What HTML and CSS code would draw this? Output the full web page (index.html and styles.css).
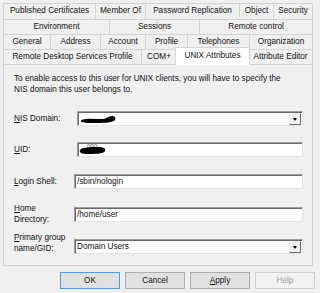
FILE: index.html
```html
<!DOCTYPE html>
<html lang="en">
<head>
    <meta charset="UTF-8">
    <title>User Properties - UNIX Attributes</title>
    <link rel="stylesheet" href="styles.css">
</head>
<body>
    <div class="dialog">
        <div class="tabs">
            <div class="tab-row">
                <span class="tab w-pub">Published Certificates</span>
                <span class="tab w-member">Member Of</span>
                <span class="tab w-pass">Password Replication</span>
                <span class="tab w-object">Object</span>
                <span class="tab w-sec">Security</span>
            </div>
            <div class="tab-row">
                <span class="tab w-env">Environment</span>
                <span class="tab w-sess">Sessions</span>
                <span class="tab w-remote">Remote control</span>
            </div>
            <div class="tab-row">
                <span class="tab w-gen">General</span>
                <span class="tab w-addr">Address</span>
                <span class="tab w-acct">Account</span>
                <span class="tab w-prof">Profile</span>
                <span class="tab w-tel">Telephones</span>
                <span class="tab w-org">Organization</span>
            </div>
            <div class="tab-row">
                <span class="tab w-rds">Remote Desktop Services Profile</span>
                <span class="tab w-com">COM+</span>
                <span class="tab w-unix active">UNIX Attributes</span>
                <span class="tab w-attr">Attribute Editor</span>
            </div>
        </div>

        <div class="panel">
            <p class="intro">To enable access to this user for UNIX clients, you will have to specify the<br>NIS domain this user belongs to.</p>

            <div class="field row-nis">
                <label class="label"><u>N</u>IS Domain:</label>
                <div class="box combo narrow">
                    <svg class="redact" width="40" height="10" viewBox="0 0 40 10">
                        <path d="M1 6 C6 4 16 5 24 5 C27 4 29 2 32 2 C35 2 36 4 35 6 C33 9 22 9 12 9 C5 9 0 9 1 6 Z" fill="#000"/>
                    </svg>
                    <span class="drop"></span>
                </div>
            </div>

            <div class="field row-uid">
                <label class="label"><u>U</u>ID:</label>
                <div class="box narrow">
                    <span class="peek">000</span>
                    <svg class="redact uid" width="30" height="10" viewBox="0 0 30 10">
                        <path d="M1 5 C3 2 12 2 19 2 C24 2 27 3 26 6 C25 9 15 9 8 9 C3 9 0 8 1 5 Z" fill="#000"/>
                    </svg>
                </div>
            </div>

            <div class="field row-login">
                <label class="label"><u>L</u>ogin Shell:</label>
                <div class="box">/sbin/nologin</div>
            </div>

            <div class="field row-home">
                <label class="label"><u>H</u>ome<br>Directory:</label>
                <div class="box">/home/user</div>
            </div>

            <div class="field row-group">
                <label class="label"><u>P</u>rimary group<br>name/GID:</label>
                <div class="box combo">Domain Users<span class="drop"></span></div>
            </div>
        </div>

        <div class="buttons">
            <button class="btn default">OK</button>
            <button class="btn">Cancel</button>
            <button class="btn"><u>A</u>pply</button>
            <button class="btn" disabled>Help</button>
        </div>
    </div>
</body>
</html>
```

FILE: styles.css
```css
* {
    margin: 0;
    padding: 0;
    box-sizing: border-box;
}

body {
    font-family: "Liberation Sans", Arial, sans-serif;
    font-size: 8.2px;
    color: #111;
    background: #f0f0f0;
    width: 320px;
    height: 293px;
    overflow: hidden;
}

.dialog {
    padding: 3px 0 0 3px;
}

.tabs {
    width: 310px;
}

.tab-row {
    display: flex;
    height: 15px;
}

.tab-row:first-child {
    height: 16px;
}

.tab {
    flex: none;
    text-align: center;
    border: 1px solid #d4d4d4;
    border-bottom: none;
    border-left: none;
    background: #f0f0f0;
    line-height: 14px;
    white-space: nowrap;
}

.tab:first-child {
    border-left: 1px solid #d4d4d4;
}

.tab.active {
    position: relative;
    z-index: 2;
    background: #fff;
    border-left: 1px solid #d4d4d4;
    margin: -2px -1px 0 -2px;
    height: 18px;
    line-height: 16px;
}

/* row 1 */
.w-pub { width: 93px; }
.w-member { width: 50px; }
.w-pass { width: 94px; }
.w-object { width: 34px; }
.w-sec { width: 39px; }

/* row 2 */
.w-env { width: 107px; }
.w-sess { width: 90px; }
.w-remote { width: 113px; }

/* row 3 */
.w-gen { width: 48px; }
.w-addr { width: 50px; }
.w-acct { width: 45px; }
.w-prof { width: 42px; }
.w-tel { width: 62px; }
.w-org { width: 63px; }

/* row 4 */
.w-rds { width: 139px; }
.w-com { width: 35px; }
.w-unix { width: 75px; }
.w-attr { width: 64px; }

.panel {
    width: 310px;
    height: 202px;
    border: 1px solid #d4d4d4;
    background: #f0f0f0;
    padding: 0 9px 0 10px;
}

.intro {
    margin-top: 8px;
    line-height: 11px;
}

.field {
    display: flex;
    align-items: center;
}

.label {
    width: 60px;
    flex: none;
    line-height: 11px;
}

.row-nis { margin-top: 16px; }
.row-uid { margin-top: 16px; }
.row-login { margin-top: 17px; }
.row-home { margin-top: 14px; height: 22px; }
.row-group { margin-top: 7px; height: 22px; align-items: flex-end; }

.box {
    position: relative;
    flex: 1;
    height: 15px;
    background: #fff;
    border: 1px solid;
    border-color: #a0a0a0 #e3e3e3 #e3e3e3 #a0a0a0;
    box-shadow: inset 1px 1px 0 #696969;
    padding-left: 2px;
    line-height: 13px;
}

.box.narrow {
    margin-left: 3px;
}

.drop {
    position: absolute;
    right: 1px;
    top: 1px;
    width: 12px;
    height: 12px;
    background: #f0f0f0;
    border: 1px solid;
    border-color: #f0f0f0 #696969 #696969 #f0f0f0;
}

.drop::after {
    content: "";
    position: absolute;
    left: 3px;
    top: 4px;
    border-left: 2.5px solid transparent;
    border-right: 2.5px solid transparent;
    border-top: 3px solid #000;
}

.redact {
    position: absolute;
    left: 2px;
    top: 2px;
}

.redact.uid {
    left: 1px;
    top: 2px;
}

.peek {
    position: absolute;
    left: 9px;
    top: -3px;
    font-size: 6px;
    color: #555;
}

.buttons {
    display: flex;
    gap: 5px;
    margin: 6px 0 0 57px;
}

.btn {
    width: 60px;
    height: 17px;
    font-family: inherit;
    font-size: 8.2px;
    color: #111;
    background: #e1e1e1;
    border: 1px solid #adadad;
}

.btn.default {
    border-color: #4a9ee8;
}

.btn:disabled {
    color: #a0a0a0;
    background: #f2f2f2;
    border-color: #d0d0d0;
}
```
